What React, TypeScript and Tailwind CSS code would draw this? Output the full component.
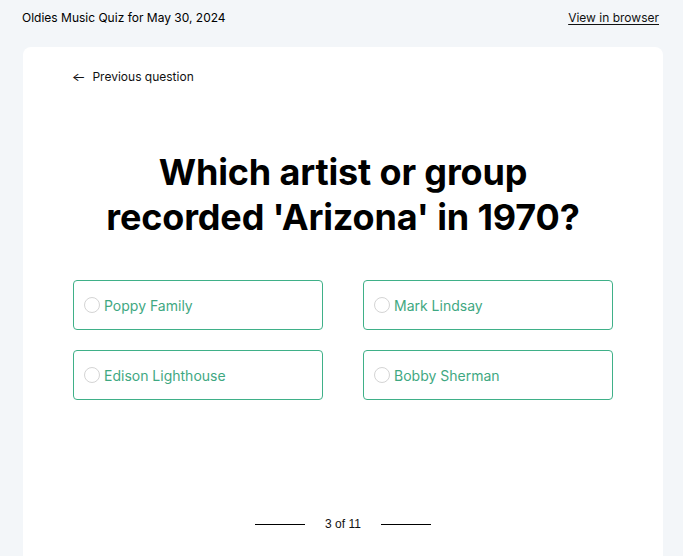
import { useState } from "react";

const options = ["Poppy Family", "Mark Lindsay", "Edison Lighthouse", "Bobby Sherman"];

export default function App() {
  const [selected, setSelected] = useState<string | null>(null);

  return (
    <div
      className="min-h-screen bg-[#f3f6f9] text-black"
      style={{ fontFamily: "Inter, 'Noto Sans', sans-serif" }}
    >
      {/* Top bar */}
      <div className="flex justify-between items-start pl-[22px] pr-[24px] pt-[9px] h-[47px] text-[12px] leading-[18px]">
        <span>Oldies Music Quiz for May 30, 2024</span>
        <a href="#" className="underline underline-offset-2 text-[#111]">
          View in browser
        </a>
      </div>

      {/* Card */}
      <div className="mx-[23px] w-[640px] bg-white rounded-lg px-[50px] pt-[22px] pb-[24px] h-[520px]">
        <button className="flex items-center gap-[8px] text-[12px] leading-[16px] text-[#111]">
          <span className="text-[12px] scale-x-125">←</span>
          Previous question
        </button>

        <h1 className="mt-[65px] text-center text-[36px] leading-[45px] font-bold tracking-[-0.15px] px-[20px]">
          Which artist or group
          <br />
          recorded 'Arizona' in 1970?
        </h1>

        <div className="mt-[40px] grid grid-cols-[250px_250px] gap-x-[40px] gap-y-[20px]">
          {options.map((o) => (
            <label
              key={o}
              onClick={() => setSelected(o)}
              className="flex items-center h-[50px] border border-[#3fb088] rounded-[4px] px-[10px] gap-[4px] cursor-pointer"
            >
              <span
                className={
                  "w-[16px] h-[16px] rounded-full border border-[#d4d4d4] " +
                  (selected === o ? "bg-[#3fb088]" : "bg-white")
                }
              />
              <span className="text-[14px] text-[#3fa882]">{o}</span>
            </label>
          ))}
        </div>

        <div className="mt-[115px] flex items-center justify-center gap-[20px]">
          <span className="w-[50px] h-px bg-black" />
          <span
            className="text-[12px] text-[#111]"
            style={{ fontFamily: "'Liberation Sans', Arial, sans-serif" }}
          >
            3 of 11
          </span>
          <span className="w-[50px] h-px bg-black" />
        </div>
      </div>
    </div>
  );
}
